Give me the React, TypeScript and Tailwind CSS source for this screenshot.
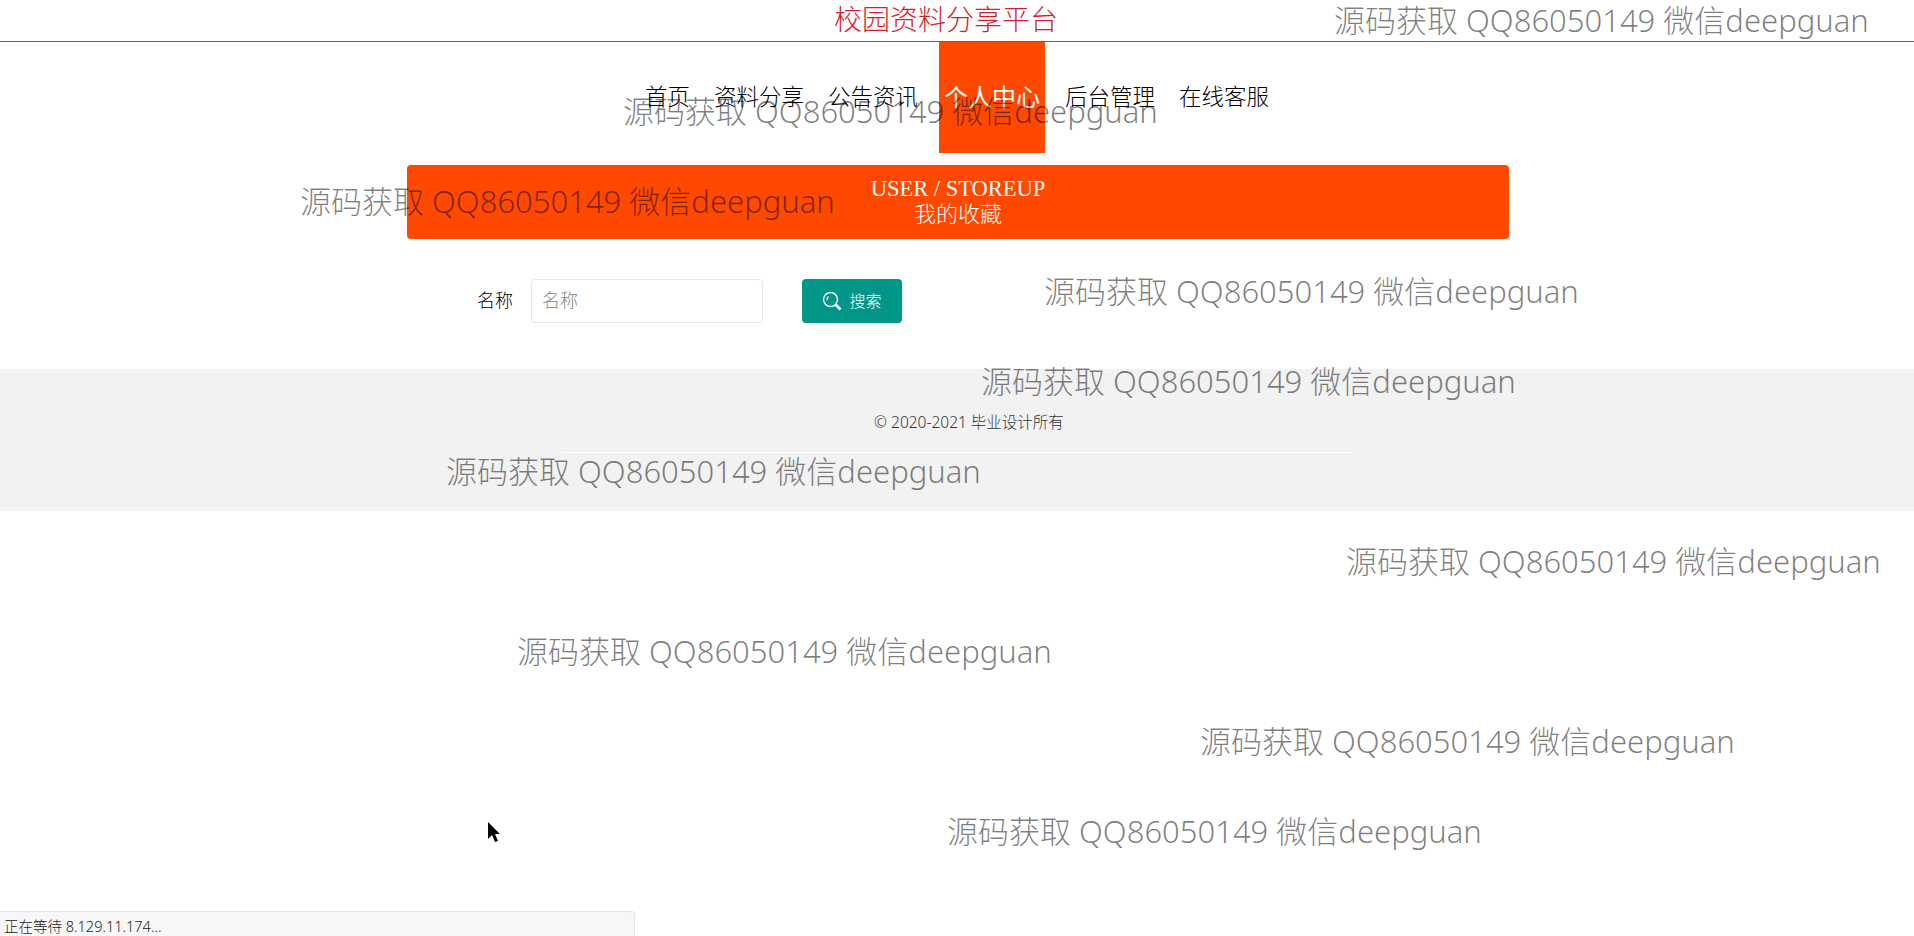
const watermarks = [
  { left: 1334, top: -1 },
  { left: 623, top: 90 },
  { left: 300, top: 180 },
  { left: 1044, top: 270 },
  { left: 981, top: 360 },
  { left: 446, top: 450 },
  { left: 1346, top: 540 },
  { left: 517, top: 630 },
  { left: 1200, top: 720 },
  { left: 947, top: 810 },
]

const navItems = ['首页', '资料分享', '公告资讯', '个人中心', '后台管理', '在线客服']

export default function App() {
  return (
    <div className="relative h-[936px] overflow-hidden bg-white font-['Noto_Sans','Noto_Sans_CJK_SC',sans-serif] font-light">
      {/* Title */}
      <header className="flex h-[42px] items-center justify-center border-b border-[#c9343f] pb-1 pr-[22px] text-[28px] text-[#d81e2c]">
        校园资料分享平台
      </header>

      {/* Nav */}
      <nav className="flex h-[111px] justify-center">
        {navItems.map((item) => {
          const active = item === '个人中心'
          return (
            <a
              key={item}
              className={
                active
                  ? 'ml-[9px] mr-[8px] flex items-center justify-center bg-[#ff4800] px-[5px] pb-[2px] text-[24px] font-normal text-white'
                  : 'flex items-center justify-center px-[12px] pb-[2px] text-[22.5px] text-black'
              }
            >
              {item}
            </a>
          )
        })}
      </nav>

      {/* Page heading */}
      <div className="mx-auto mt-3 flex h-[74px] w-[1102px] translate-x-px flex-col items-center justify-center rounded bg-[#ff4800] pb-[2px] text-[22px] leading-[25px] text-white">
        <span className="font-['Liberation_Serif',serif] text-[22.5px] font-normal">USER / STOREUP</span>
        <span>我的收藏</span>
      </div>

      {/* Search */}
      <form className="mt-10 flex h-[44px] items-center pl-[477px]">
        <label className="pb-[2px] text-[18px] text-black">名称</label>
        <input
          placeholder="名称"
          className="ml-[18px] h-[44px] w-[232px] rounded-sm border border-[#e6e6e6] px-[10px] pb-[2px] text-[18px] placeholder:text-[#858585]"
        />
        <button
          type="button"
          className="ml-[39px] flex h-[44px] w-[100px] items-center justify-center gap-[7px] rounded-sm bg-[#009688] pb-px text-[16px] text-white"
        >
          <svg width="20" height="20" viewBox="0 0 20 20" fill="none" stroke="currentColor">
            <circle cx="8.5" cy="8.5" r="7" strokeWidth="1.4" />
            <path d="M5 9.5a4 4 0 0 1 1.5-4" strokeWidth="1.1" />
            <path d="M13.5 13.5l5 5" strokeWidth="2.8" />
          </svg>
          搜索
        </button>
      </form>

      {/* Footer */}
      <footer className="mt-[46px] flex h-[142px] flex-col items-center bg-[#f2f2f2] pt-[43px]">
        <p className="ml-6 text-[15.5px] leading-5 text-[#333]">© 2020-2021 毕业设计所有</p>
        <div className="mt-5 h-px w-[791px] bg-white" />
      </footer>

      {/* Watermarks */}
      {watermarks.map((mark) => (
        <span
          key={mark.top}
          style={{ left: mark.left, top: mark.top }}
          className="absolute whitespace-nowrap text-[31px] font-light leading-[42px] text-black/50"
        >
          源码获取 QQ86050149 微信deepguan
        </span>
      ))}

      {/* Cursor */}
      <svg className="absolute left-[487px] top-[821px]" width="16" height="24" viewBox="0 0 16 24">
        <path d="M1 1v17l4-4 3 7 3-1-3-7h5z" fill="#000" />
      </svg>

      {/* Browser status bubble */}
      <div className="absolute bottom-0 left-0 h-[25px] w-[635px] rounded-tr border-r border-t border-[#e3e3e3] bg-[#f7f7f7] pl-1 text-[14.5px] leading-[28px] text-[#222]">
        正在等待 8.129.11.174...
      </div>
    </div>
  )
}
